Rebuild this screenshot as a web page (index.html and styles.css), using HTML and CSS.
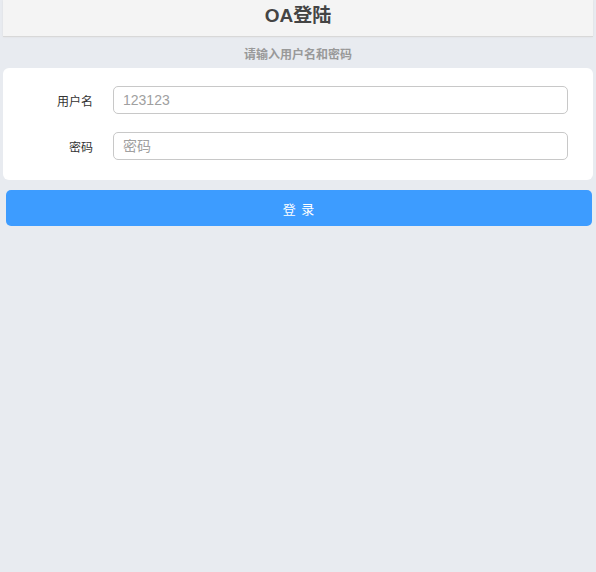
FILE: index.html
```html
<!DOCTYPE html>
<html lang="zh-CN">
<head>
    <meta charset="UTF-8">
    <title>OA登陆</title>
    <link rel="stylesheet" href="styles.css">
</head>
<body>
    <div class="header">OA登陆</div>
    <div class="tip">请输入用户名和密码</div>
    <form class="card" autocomplete="off">
        <div class="form-group">
            <label for="username">用户名</label>
            <input type="text" id="username" name="username" placeholder="123123">
        </div>
        <div class="form-group">
            <label for="password">密码</label>
            <input type="password" id="password" name="password" placeholder="密码">
        </div>
    </form>
    <button type="button" class="btn">登 录</button>
</body>
</html>
```

FILE: styles.css
```css
body {
    background: #e8ebf0;
    font-family: "Liberation Sans", "Noto Sans CJK SC", sans-serif;
    margin: 0;
    padding: 0 3px;
}
.header {
    height: 36px;
    line-height: 32px;
    background: #f4f4f4;
    border-bottom: 1px solid #d8d8d8;
    box-shadow: 0 0 2px #ddd;
    text-align: center;
    font-size: 19px;
    font-weight: bold;
    color: #444;
}
.tip {
    height: 31px;
    line-height: 36px;
    text-align: center;
    font-size: 12px;
    font-weight: bold;
    color: #999;
}
.card {
    background: #fff;
    border-radius: 6px;
    padding: 18px 25px 20px 0;
    display: flex;
    flex-direction: column;
    gap: 18px;
}
.form-group {
    display: flex;
    align-items: center;
}
label {
    width: 90px;
    margin-right: 20px;
    text-align: right;
    font-size: 12px;
    color: #333;
}
input {
    flex: 1;
    height: 28px;
    border: 1px solid #c8c8c8;
    border-radius: 5px;
    padding: 0 9px;
    font-size: 14px;
    font-family: "Liberation Sans", "Noto Sans CJK SC", sans-serif;
    box-sizing: border-box;
    outline: none;
}
input::placeholder {
    color: #a0a0a0;
}
.btn {
    display: block;
    width: 586px;
    margin: 10px 0 0 3px;
    height: 36px;
    background: #3d9cff;
    color: #fff;
    border: none;
    border-radius: 5px;
    font-size: 13px;
    letter-spacing: 1px;
    font-family: "Liberation Sans", "Noto Sans CJK SC", sans-serif;
    cursor: pointer;
}
```
